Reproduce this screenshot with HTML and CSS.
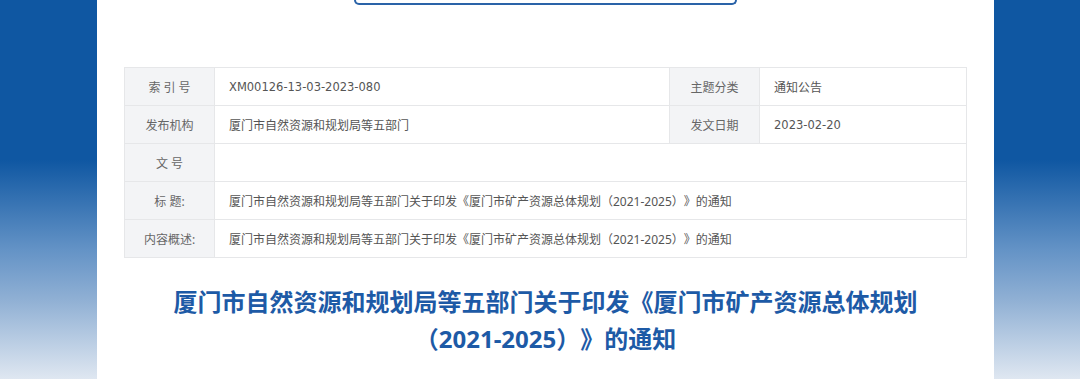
FILE: index.html
```html
<!DOCTYPE html>
<html lang="zh-CN">
<head>
    <meta charset="UTF-8">
    <meta name="viewport" content="width=device-width, initial-scale=1.0">
    <title>厦门市自然资源和规划局</title>
    <link rel="stylesheet" href="styles.css">
</head>
<body>
<div class="main">
    <div class="search-box"></div>
    <table class="info">
        <tr>
            <th>索 引 号</th>
            <td class="code">XM00126-13-03-2023-080</td>
            <th>主题分类</th>
            <td>通知公告</td>
        </tr>
        <tr>
            <th>发布机构</th>
            <td>厦门市自然资源和规划局等五部门</td>
            <th>发文日期</th>
            <td class="code">2023-02-20</td>
        </tr>
        <tr>
            <th>文 号</th>
            <td colspan="3"></td>
        </tr>
        <tr>
            <th>标 题:</th>
            <td colspan="3">厦门市自然资源和规划局等五部门关于印发《厦门市矿产资源总体规划（2021-2025）》的通知</td>
        </tr>
        <tr>
            <th>内容概述:</th>
            <td colspan="3">厦门市自然资源和规划局等五部门关于印发《厦门市矿产资源总体规划（2021-2025）》的通知</td>
        </tr>
    </table>
    <h1 class="title">厦门市自然资源和规划局等五部门关于印发《厦门市矿产资源总体规划<br>（2021-2025）》的通知</h1>
</div>
</body>
</html>
```

FILE: styles.css
```css
html, body {
    height: 100%;
}

body {
    margin: 0;
    font-family: "Noto Sans", "Noto Sans CJK SC", sans-serif;
    text-spacing-trim: space-all;
    background: linear-gradient(to bottom, #0f57a2 0, #0f57a2 160px, #6493c6 250px, #90b0d4 300px, #dfe7f1 379px);
    overflow: hidden;
}

.main {
    width: 897px;
    height: 100%;
    margin-left: 97px;
    background-color: #fff;
}

.search-box {
    width: 379px;
    height: 3px;
    margin-left: 257px;
    border: 2px solid #2a63a8;
    border-top: none;
    border-radius: 0 0 7px 7px;
}

.info {
    border-collapse: collapse;
    width: 843px;
    margin: 62px 0 0 27px;
    font-size: 12px;
}

.info th, .info td {
    height: 37px;
    padding: 0;
    border: 1px solid #e6e7e9;
    font-weight: normal;
}

.info th {
    width: 89px;
    background-color: #f3f4f6;
    color: #666;
    text-align: center;
}

.info td {
    padding-left: 14px;
    color: #555;
    text-align: left;
}

.info td.code {
    font-family: "DejaVu Sans", "Noto Sans", sans-serif;
    font-size: 11.5px;
}

.info tr:first-child td:nth-child(2) {
    width: 440px;
}

.title {
    margin: 25px 0 0;
    font-size: 24px;
    line-height: 37px;
    font-weight: bold;
    color: #1d5aa6;
    text-align: center;
}
```
